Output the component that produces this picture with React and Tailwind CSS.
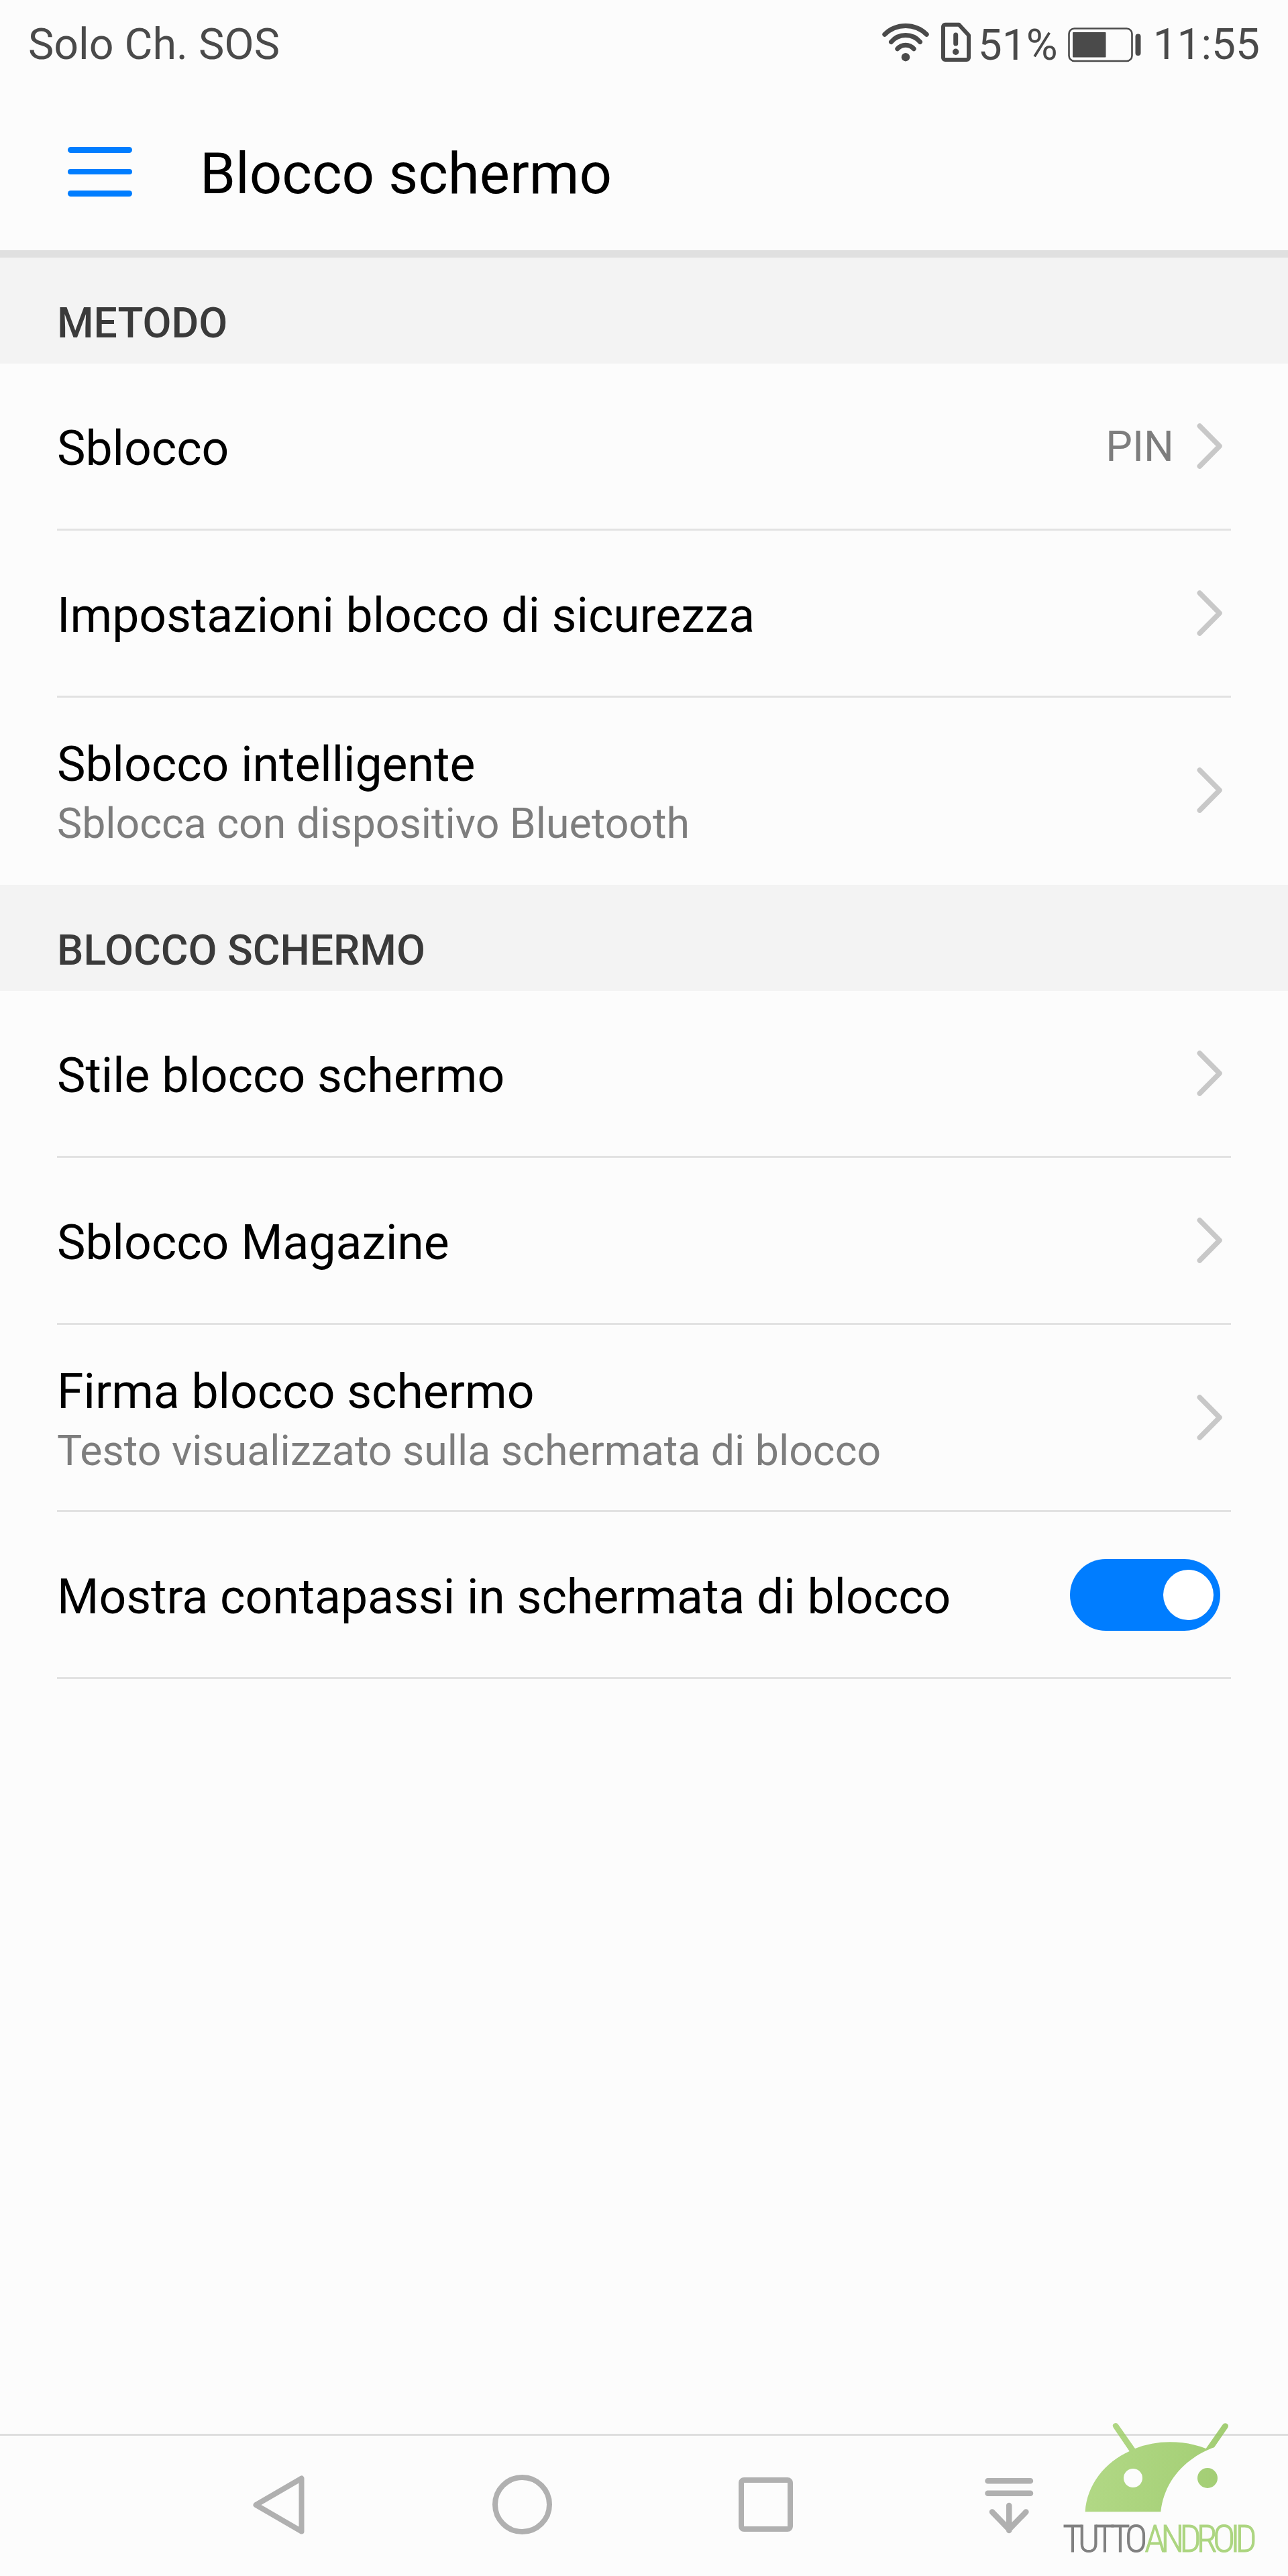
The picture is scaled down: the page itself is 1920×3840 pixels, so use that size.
import clsx from "clsx";

const sections = [
  {
    title: "METODO",
    rows: [
      { label: "Sblocco", value: "PIN" },
      { label: "Impostazioni blocco di sicurezza" },
      { label: "Sblocco intelligente", hint: "Sblocca con dispositivo Bluetooth", last: true },
    ],
  },
  {
    title: "BLOCCO SCHERMO",
    rows: [
      { label: "Stile blocco schermo" },
      { label: "Sblocco Magazine" },
      { label: "Firma blocco schermo", hint: "Testo visualizzato sulla schermata di blocco" },
      { label: "Mostra contapassi in schermata di blocco", toggle: true },
    ],
  },
];

const WifiIcon = () => (
  <svg className="h-[72px] w-[70px]" viewBox="0 30.5 70 72" fill="none" stroke="#4a4a4a" strokeWidth="7" strokeLinecap="round">
    <path d="M3.8 50.8a44.7 44.7 0 0 1 62.4 0" />
    <path d="M13.5 62a28.3 28.3 0 0 1 43 0" />
    <path d="M22.8 72.3a16 16 0 0 1 24.4 0" />
    <circle cx="35" cy="84.7" r="6.2" fill="#4a4a4a" stroke="none" />
  </svg>
);

const SimAlertIcon = () => (
  <svg className="h-[72px] w-[44px]" viewBox="0 30.5 44 72" fill="none" stroke="#4a4a4a" strokeWidth="6">
    <path d="M6 36.2h20.5L41 52v33.6a3 3 0 0 1-3 3H6a3 3 0 0 1-3-3V39.2a3 3 0 0 1 3-3z" strokeLinejoin="round" />
    <path d="M21.7 51.5v13" strokeWidth="7" strokeLinecap="round" />
    <circle cx="21.7" cy="76.7" r="4.7" fill="#4a4a4a" stroke="none" />
  </svg>
);

const BatteryIcon = () => (
  <svg className="h-[72px] w-[109px]" viewBox="0 30.5 109 72" fill="#4a4a4a">
    <rect x="1.5" y="42" width="94" height="48.5" rx="8" fill="none" stroke="#4a4a4a" strokeWidth="2.6" />
    <rect x="7" y="47.5" width="49.5" height="37.5" rx="1" />
    <rect x="100.5" y="50" width="8" height="32.5" rx="4" />
  </svg>
);

const ChevronIcon = () => (
  <svg className="mr-3 h-[70px] w-[39px] shrink-0" viewBox="0 0 39 70" fill="none" stroke="#c8c8c8" strokeWidth="7.5" strokeLinecap="round" strokeLinejoin="round">
    <path d="M4.3 5 34 35 4.3 65" />
  </svg>
);

const Toggle = () => (
  <div className="mr-4 flex h-[107px] w-56 shrink-0 items-center justify-end rounded-full bg-[#007dff] pr-[10px]">
    <div className="size-[75px] rounded-full bg-white" />
  </div>
);

const StatusBar = () => (
  <div className="flex h-[133px] items-center px-[42px] text-[64px] text-[#4a4a4a]">
    <span className="flex-1 text-[64.5px]">Solo Ch. SOS</span>
    <WifiIcon />
    <div className="w-[18px]" />
    <SimAlertIcon />
    <span className="ml-[11px] pt-[3px]">51%</span>
    <div className="w-[15px]" />
    <BatteryIcon />
    <span className="ml-[18px]">11:55</span>
  </div>
);

const TitleBar = () => (
  <header className="flex h-[251px] items-center border-b-[11px] border-[#e0e0e0] pt-[14px] pl-[101px]">
    <div className="mb-2 flex flex-col gap-6">
      <div className="h-[8.5px] w-24 rounded-full bg-[#007dff]" />
      <div className="h-[8.5px] w-24 rounded-full bg-[#007dff]" />
      <div className="h-[8.5px] w-24 rounded-full bg-[#007dff]" />
    </div>
    <h1 className="ml-[101px] text-[85.2px] text-black">Blocco schermo</h1>
  </header>
);

const Row = ({ label, hint, value, toggle, last }) => (
  <div
    className={clsx(
      "mx-[85px] flex items-center border-b-[3px]",
      hint ? "h-[279px]" : "h-[249px]",
      last ? "border-transparent" : "border-[#e2e2e2]"
    )}
  >
    <div className={clsx("flex-1", hint ? "pt-3" : "pt-2")}>
      <p className="text-[71.5px] leading-[88px] text-black">{label}</p>
      {hint && <p className="text-[62.6px] leading-[88px] text-[#7d7d7d]">{hint}</p>}
    </div>
    {value && <span className="mr-[34px] pt-[3px] text-[62.9px] text-[#7d7d7d]">{value}</span>}
    {toggle ? <Toggle /> : <ChevronIcon />}
  </div>
);

const NavBar = () => (
  <nav className="border-t-[3px] border-[#dedede] pb-1">
    <div className="ml-[234px] grid h-[205px] w-[1452px] grid-cols-4 place-items-center">
      <svg className="size-[90px]" viewBox="0 0 90 90" fill="none" stroke="#b0b0b0" strokeWidth="8" strokeLinejoin="round">
        <path d="M78.5 5.5v79L10.5 45z" />
      </svg>
      <div className="size-[89px] rounded-full border-8 border-[#b0b0b0]" />
      <div className="size-[81px] rounded-lg border-8 border-[#b0b0b0]" />
      <svg className="size-[90px]" viewBox="0 0 90 90" fill="none" stroke="#b0b0b0" strokeWidth="8.5" strokeLinecap="round" strokeLinejoin="round">
        <path d="M12.5 9.2H76M12.5 27.8H76M44.2 46v37M19 55.5l25.2 26 25.2-26" />
      </svg>
    </div>
  </nav>
);

const Watermark = () => (
  <svg className="absolute right-[30px] bottom-[7px] h-[226px] w-[310px]" viewBox="480 80 930 678">
    <defs>
      <linearGradient id="leaf" gradientUnits="userSpaceOnUse" x1="600" y1="300" x2="1230" y2="360">
        <stop offset="0" stopColor="#a1d06b" />
        <stop offset="1" stopColor="#8fc456" />
      </linearGradient>
    </defs>
    <g fill="url(#leaf)" opacity="0.82">
      <path
        fillRule="evenodd"
        d="M593 492C600 370 684 268 791 221L719 115Q712 102 722 97Q734 92 741 102L816 209Q890 180 972 180Q1060 180 1133 209L1207 103Q1214 93 1226 97Q1237 103 1231 115L1170 204Q1159 207 1140 216C1020 271 944 370 931 492ZM849 341a42 42 0 1 0-84 0a42 42 0 1 0 84 0z"
      />
      <circle cx="1140" cy="341" r="45" />
    </g>
    <text x="493" y="671" fontSize="169" textLength="378" strokeWidth="3" className="fill-[#808080] stroke-[#808080] font-['Roboto_Condensed'] font-light">
      TUTTO
    </text>
    <text x="859" y="671" fontSize="169" textLength="502" strokeWidth="3" className="fill-[#acd580] stroke-[#acd580] font-['Roboto_Condensed'] font-light">
      ANDROID
    </text>
  </svg>
);

export default function App() {
  return (
    <div className="relative flex h-[3840px] w-[1920px] flex-col overflow-hidden bg-[#fcfcfc] font-['Roboto','Noto_Sans',sans-serif]">
      <StatusBar />
      <TitleBar />
      <main className="flex-1">
        {sections.map((section) => (
          <section key={section.title}>
            <h2 className="flex h-[158px] items-center bg-[#f3f3f3] pt-[38px] pl-[85px] text-[62.4px] font-medium text-[#3a3a3a]">
              {section.title}
            </h2>
            {section.rows.map((row) => (
              <Row key={row.label} {...row} />
            ))}
          </section>
        ))}
      </main>
      <NavBar />
      <Watermark />
    </div>
  );
}
